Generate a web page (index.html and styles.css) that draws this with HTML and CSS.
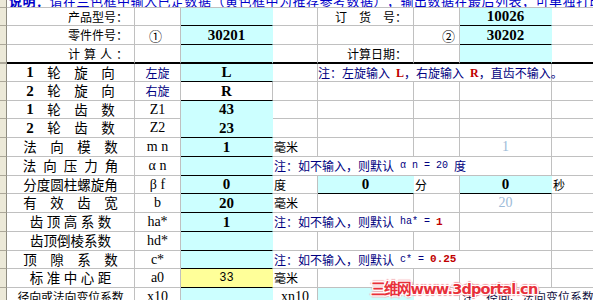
FILE: index.html
```html
<!DOCTYPE html>
<html lang="zh-CN">
<head>
<meta charset="utf-8">
<title>齿轮参数输入</title>
<link rel="stylesheet" href="styles.css">
</head>
<body>
<div class="sheet">
  <div class="row r-title">
    <div class="c hdr"></div>
    <div class="c title"><span class="title-txt"><b>说明：</b>请在兰色框中输入已定数据（黄色框中为推荐参考数据），输出数据在最后列表，可单独打印和保存。</span></div>
  </div>

  <div class="row h18">
    <div class="c hdr"></div>
    <div class="c lab-r sm">产品型号：</div>
    <div class="c"></div>
    <div class="c cy bt bb"></div>
    <div class="c"></div>
    <div class="c lab-r sm"><span class="ls12">订货</span>号：</div>
    <div class="c"></div>
    <div class="c cy bt bb num">10026</div>
    <div class="c"></div>
  </div>

  <div class="row h19">
    <div class="c hdr"></div>
    <div class="c lab-r sm">零件件号：</div>
    <div class="c ctr circ">①</div>
    <div class="c cy bb num">30201</div>
    <div class="c"></div>
    <div class="c"></div>
    <div class="c lab-r circ">②</div>
    <div class="c cy bb num">30202</div>
    <div class="c"></div>
  </div>

  <div class="row h19 thick">
    <div class="c hdr"></div>
    <div class="c lab-r sm"><span class="ls4">计算人</span>：</div>
    <div class="c"></div>
    <div class="c cy"></div>
    <div class="c"></div>
    <div class="c lab-r sm">计算日期：</div>
    <div class="c"></div>
    <div class="c cy"></div>
    <div class="c"></div>
  </div>

  <div class="row h18">
    <div class="c hdr"></div>
    <div class="c lab w27"><b class="dg">1</b>轮旋向</div>
    <div class="c ctr navy sm">左旋</div>
    <div class="c cy bb num">L</div>
    <div class="c"></div>
    <div class="c note s3 spill">注：左旋输入<span class="lat"> </span><b class="red">L</b>，右旋输入<span class="lat"> </span><b class="red">R</b>，直齿不输入。</div>
    <div class="c"></div>
  </div>

  <div class="row h19">
    <div class="c hdr"></div>
    <div class="c lab w27"><b class="dg">2</b>轮旋向</div>
    <div class="c ctr navy sm">右旋</div>
    <div class="c wb bb num">R</div>
    <div class="c"></div>
    <div class="c"></div>
    <div class="c"></div>
    <div class="c"></div>
    <div class="c"></div>
  </div>

  <div class="row h18">
    <div class="c hdr"></div>
    <div class="c lab w27"><b class="dg">1</b>轮齿数</div>
    <div class="c ctr sym">Z1</div>
    <div class="c cy nb num">43</div>
    <div class="c"></div>
    <div class="c"></div>
    <div class="c"></div>
    <div class="c"></div>
    <div class="c"></div>
  </div>

  <div class="row h19">
    <div class="c hdr"></div>
    <div class="c lab w27"><b class="dg">2</b>轮齿数</div>
    <div class="c ctr sym">Z2</div>
    <div class="c cy bb num">23</div>
    <div class="c"></div>
    <div class="c"></div>
    <div class="c"></div>
    <div class="c"></div>
    <div class="c"></div>
  </div>

  <div class="row h19">
    <div class="c hdr"></div>
    <div class="c lab w27">法向模数</div>
    <div class="c ctr sym">m n</div>
    <div class="c cy bb num">1</div>
    <div class="c unit">毫米</div>
    <div class="c"></div>
    <div class="c"></div>
    <div class="c ctr light">1</div>
    <div class="c"></div>
  </div>

  <div class="row h19">
    <div class="c hdr"></div>
    <div class="c lab w20">法向压力角</div>
    <div class="c ctr sym">α n</div>
    <div class="c cy bb"></div>
    <div class="c note s4">注：如不输入，则默认<span class="lat"> α n = 20 </span>度</div>
    <div class="c"></div>
  </div>

  <div class="row h18">
    <div class="c hdr"></div>
    <div class="c lab">分度圆柱螺旋角</div>
    <div class="c ctr sym">β f</div>
    <div class="c cy bb num">0</div>
    <div class="c unit">度</div>
    <div class="c cy bt bb num">0</div>
    <div class="c unit">分</div>
    <div class="c cy bt bb num">0</div>
    <div class="c unit">秒</div>
  </div>

  <div class="row h19">
    <div class="c hdr"></div>
    <div class="c lab w27">有效齿宽</div>
    <div class="c ctr sym">b</div>
    <div class="c cy bb num">20</div>
    <div class="c unit">毫米</div>
    <div class="c"></div>
    <div class="c"></div>
    <div class="c ctr light">20</div>
    <div class="c"></div>
  </div>

  <div class="row h19">
    <div class="c hdr"></div>
    <div class="c lab w17">齿顶高系数</div>
    <div class="c ctr sym">ha*</div>
    <div class="c cy bb num">1</div>
    <div class="c note s3">注：如不输入，则默认<span class="lat"> ha* = </span><b class="redm">1</b></div>
    <div class="c"></div>
    <div class="c"></div>
  </div>

  <div class="row h19">
    <div class="c hdr"></div>
    <div class="c lab">齿顶倒棱系数</div>
    <div class="c ctr sym">hd*</div>
    <div class="c cy bb"></div>
    <div class="c"></div>
    <div class="c"></div>
    <div class="c"></div>
    <div class="c"></div>
    <div class="c"></div>
  </div>

  <div class="row h18">
    <div class="c hdr"></div>
    <div class="c lab w27">顶隙系数</div>
    <div class="c ctr sym">c*</div>
    <div class="c cy bb"></div>
    <div class="c note s4">注：如不输入，则默认<span class="lat"> c* = </span><b class="redm">0.25</b></div>
    <div class="c"></div>
  </div>

  <div class="row h19">
    <div class="c hdr"></div>
    <div class="c lab w17">标准中心距</div>
    <div class="c ctr sym">a0</div>
    <div class="c yl bb ctr plain">33</div>
    <div class="c unit">毫米</div>
    <div class="c"></div>
    <div class="c"></div>
    <div class="c"></div>
    <div class="c"></div>
  </div>

  <div class="row h19">
    <div class="c hdr"></div>
    <div class="c lab tight">径向或法向变位系数</div>
    <div class="c ctr sym">x10</div>
    <div class="c cy"></div>
    <div class="c ctr sym">xn10</div>
    <div class="c cy"></div>
    <div class="c"></div>
    <div class="c note s2 dk">注：径向、法向变位系数二者只需输入其一</div>
  </div>

  <div class="mark">三维网www.3dportal.cn</div>
</div>
</body>
</html>
```

FILE: styles.css
```css
* { box-sizing: border-box; }
html, body { margin: 0; padding: 0; background: #ffffff; overflow: hidden; }
body { width: 593px; height: 300px; }

.sheet {
  position: relative;
  width: 593px;
  height: 300px;
  overflow: hidden;
  font-family: "Noto Sans CJK SC", sans-serif;
  color: #000;
  text-spacing-trim: space-all;
}

.row {
  display: grid;
  grid-template-columns: 7px 128px 46px 92px 45px 96px 46px 92px 60px;
}
.r-title { height: 8px; }
.h18 { height: 18px; }
.h19 { height: 19px; }

.c {
  border-right: 1px solid #c0c0c0;
  border-bottom: 1px solid #c0c0c0;
  display: flex;
  align-items: center;
  white-space: nowrap;
  overflow: hidden;
  font-size: 13px;
  line-height: 1;
  min-width: 0;
}

.hdr {
  background: #ece9d8;
  border-right: 1px solid #8e8c80;
  border-bottom: 1px solid #aca899;
}

.thick .c { border-bottom: 2px solid #000; }
.thick .hdr { border-bottom: 2px solid #aca899; }

.title {
  grid-column: span 8;
  align-items: flex-end;
  border-right: none;
  overflow: hidden;
}
.title-txt {
  color: #0000c8;
  font-size: 13px;
  line-height: 13px;
  padding-left: 2px;
  letter-spacing: 0.5px;
}
.title-txt b { font-weight: 700; }

.lab { justify-content: center; font-size: 13.5px; }
.lab-r { justify-content: flex-end; padding-right: 6px; }
.sm { font-size: 12px; }
.ctr { justify-content: center; }

.w27 { letter-spacing: 13.5px; padding-left: 13.5px; }
.w20 { letter-spacing: 7px; padding-left: 7px; }
.w17 { letter-spacing: 3.5px; padding-left: 3.5px; }
.tight { font-size: 12px; letter-spacing: -0.2px; }
.ls12 { letter-spacing: 12px; }
.ls4 { letter-spacing: 4px; }

.dg {
  font-family: "Liberation Serif", serif;
  font-weight: 700;
  font-size: 15px;
}

.circ { font-size: 13px; padding-right: 4px; }

.navy { color: #000080; }

.sym {
  font-family: "Liberation Serif", serif;
  font-size: 14px;
}

.cy { background: #ccffff; border-right-color: #ccffff; }
.yl { background: #ffff99; border-right-color: #ffff99; }
.bb { border-bottom-color: #000; }
.nb { border-bottom-color: #ccffff; }
.wb { border-bottom-color: #000; }

.num {
  justify-content: center;
  font-family: "Liberation Serif", serif;
  font-weight: 700;
  font-size: 15px;
}
.plain {
  font-family: "Liberation Mono", monospace;
  font-size: 12px;
}

.unit { font-size: 12px; padding-left: 1px; }

.light {
  color: #9dbbd8;
  font-family: "Liberation Serif", serif;
  font-size: 14px;
}

.note {
  color: #000080;
  font-size: 12px;
  padding-left: 1px;
}
.spill { overflow: visible; position: relative; z-index: 1; padding-left: 0; }
.s2 { grid-column: span 2; padding-left: 2px; }
.s3 { grid-column: span 3; }
.s4 { grid-column: span 4; }
.dk { color: #101040; }

.lat {
  font-family: "Liberation Mono", monospace;
  font-size: 10px;
  white-space: pre;
}
.red {
  color: #c00000;
  font-family: "Liberation Serif", serif;
  font-weight: 700;
  font-size: 12px;
}
.redm {
  color: #c00000;
  font-family: "Liberation Mono", monospace;
  font-weight: 700;
  font-size: 11px;
}

.mark {
  position: absolute;
  left: 371px;
  top: 280px;
  z-index: 2;
  font-family: "DejaVu Sans", sans-serif;
  font-weight: 700;
  font-size: 14.5px;
  line-height: 18px;
  color: #e8303a;
  letter-spacing: -0.8px;
  text-shadow:
    1px 0 0 #fff, -1px 0 0 #fff, 0 1px 0 #fff, 0 -1px 0 #fff,
    1px 1px 0 #fff, -1px -1px 0 #fff, 1px -1px 0 #fff, -1px 1px 0 #fff,
    2px 0 1px #f4a0a8, -2px 0 1px #f4a0a8, 0 2px 1px #f4a0a8, 0 -2px 1px #f4a0a8;
}
```
